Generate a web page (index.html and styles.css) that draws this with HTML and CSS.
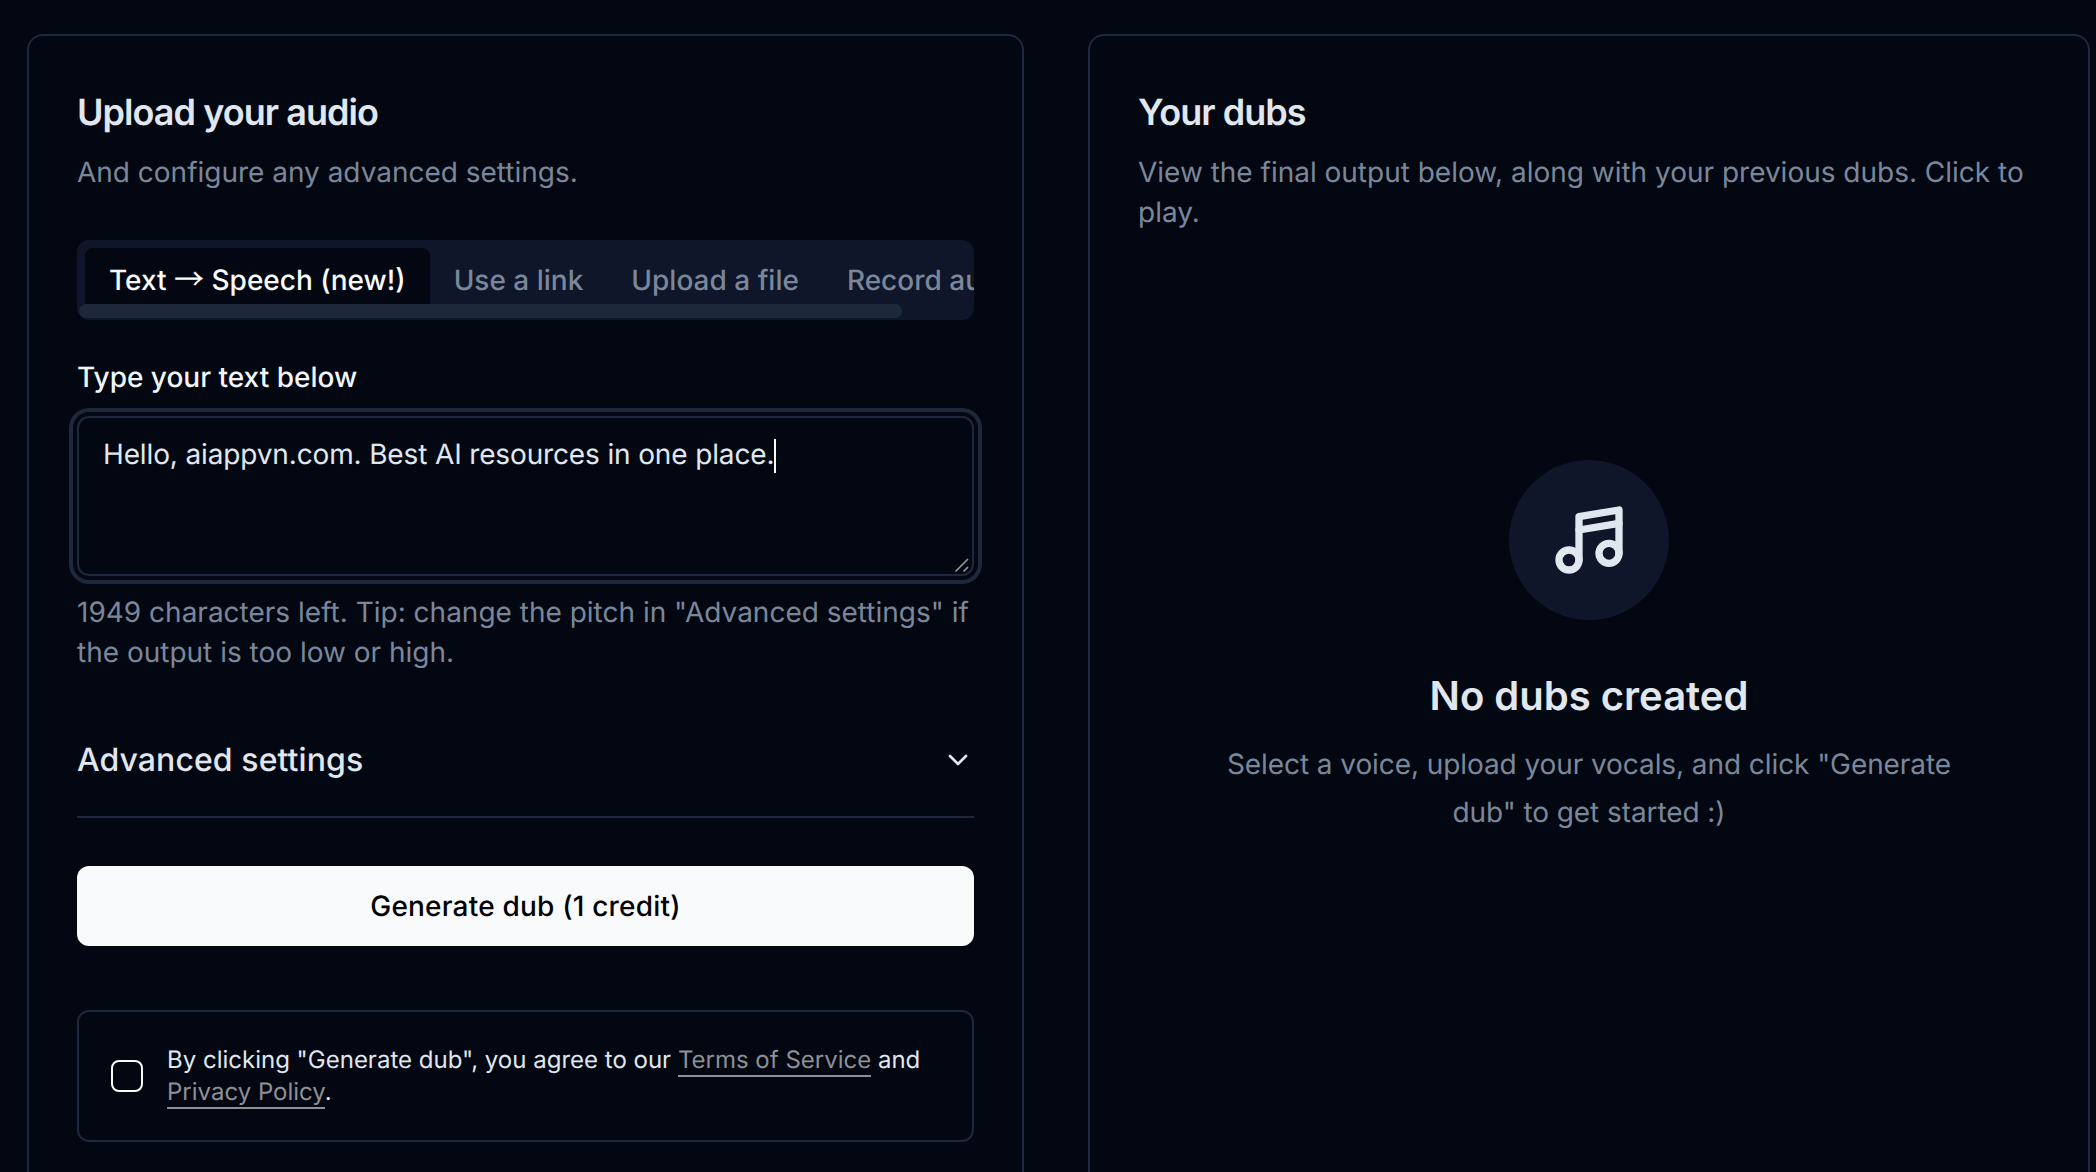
FILE: index.html
```html
<!DOCTYPE html>
<html lang="en">
<head>
    <meta charset="UTF-8">
    <title>Generate dub</title>
    <link rel="stylesheet" href="styles.css">
</head>
<body>
    <main class="page">
        <section class="card">
            <h2 class="card-title">Upload your audio</h2>
            <p class="card-desc">And configure any advanced settings.</p>

            <div class="tabs">
                <div class="tabs-list">
                    <div class="tab active">Text <span class="arrow">→</span> Speech (new!)</div>
                    <div class="tab">Use a link</div>
                    <div class="tab">Upload a file</div>
                    <div class="tab">Record audio</div>
                </div>
                <div class="tabs-track"><div class="tabs-thumb"></div></div>
            </div>

            <div class="field-label">Type your text below</div>
            <div class="textarea">
                <span class="typed">Hello, aiappvn.com. Best AI resources in one place.</span><span class="caret"></span>
                <svg class="grip" width="16" height="16" viewBox="0 0 16 16">
                    <path d="M1.5 14.5 14 2M9.5 14.5 14 10" stroke="#9a9a9a" stroke-width="1.6" fill="none"/>
                </svg>
            </div>
            <p class="hint">1949 characters left. Tip: change the pitch in "Advanced settings" if the output is too low or high.</p>

            <div class="accordion">
                <span>Advanced settings</span>
                <svg width="32" height="32" viewBox="0 0 24 24" fill="none" stroke="currentColor" stroke-width="2" stroke-linecap="round" stroke-linejoin="round">
                    <path d="m6 9 6 6 6-6"/>
                </svg>
            </div>

            <button class="btn-primary">Generate dub (1 credit)</button>

            <div class="consent">
                <div class="checkbox"></div>
                <p>By clicking "Generate dub", you agree to our <a href="#">Terms of Service</a> and <a href="#">Privacy Policy</a>.</p>
            </div>
        </section>

        <section class="card">
            <h2 class="card-title">Your dubs</h2>
            <p class="card-desc">View the final output below, along with your previous dubs. Click to play.</p>

            <div class="empty">
                <div class="empty-icon">
                    <svg width="80" height="80" viewBox="0 0 24 24" fill="none" stroke="currentColor" stroke-width="2.2" stroke-linecap="round" stroke-linejoin="round">
                        <path d="M9 18V5l12-2v13"/>
                        <path d="m9 9 12-2"/>
                        <circle cx="6" cy="18" r="3"/>
                        <circle cx="18" cy="16" r="3"/>
                    </svg>
                </div>
                <h3>No dubs created</h3>
                <p>Select a voice, upload your vocals, and click "Generate dub" to get started :)</p>
            </div>
        </section>
    </main>
</body>
</html>
```

FILE: styles.css
```css
* {
    box-sizing: border-box;
}
html, body {
    height: 100%;
}
body {
    margin: 0;
    overflow: hidden;
    background: #030711;
    color: #e1e7ef;
    font-family: Inter, "Noto Sans", sans-serif;
    font-size: 28px;
    line-height: 40px;
    text-rendering: geometricPrecision;
}
h2, h3, p {
    margin: 0;
}
.page {
    display: grid;
    grid-template-columns: 997px 1002px;
    gap: 64px;
    height: 100%;
    overflow: hidden;
    padding: 34px 0 0 27px;
}
.card {
    border: 2px solid #1d283a;
    border-radius: 16px;
    padding: 48px 48px 0;
    height: 1300px;
}
.card-title {
    font-size: 36px;
    line-height: 56px;
    font-weight: 600;
    letter-spacing: -0.95px;
}
.card-desc {
    margin-top: 12px;
    color: #7a879b;
    letter-spacing: -0.01px;
}
.tabs {
    margin-top: 48px;
    height: 80px;
    background: #0f1629;
    border-radius: 12px;
    overflow: hidden;
}
.tabs-list {
    display: flex;
    padding: 8px 8px 0;
    height: 64px;
    white-space: nowrap;
}
.tab {
    padding: 12px 24px 4px;
    font-weight: 500;
    color: #7a879b;
    border-radius: 8px 8px 0 0;
}
.tab.active {
    background: #030711;
    color: #f8fafc;
}
.arrow {
    font-family: "Noto Sans CJK JP", "Liberation Sans", sans-serif;
    font-size: 30px;
    font-weight: 400;
    line-height: 28px;
}
.tabs-track {
    height: 16px;
    padding: 0 2px 2px;
}
.tabs-thumb {
    width: 823px;
    height: 14px;
    background: #1d283a;
    border-radius: 7px;
}
.field-label {
    margin-top: 37px;
    font-weight: 500;
    color: #f1f5f9;
}
.textarea {
    position: relative;
    margin-top: 19px;
    height: 160px;
    padding: 16px 24px;
    border: 2px solid #1d283a;
    border-radius: 12px;
    box-shadow: 0 0 0 4px #030711, 0 0 0 8px #1d283a;
}
.typed {
    letter-spacing: -0.14px;
}
.caret {
    display: inline-block;
    width: 2px;
    height: 34px;
    background: #f8fafc;
    vertical-align: -9px;
}
.grip {
    position: absolute;
    right: 2px;
    bottom: 1px;
}
.hint {
    margin-top: 16px;
    color: #7a879b;
}
.accordion {
    display: flex;
    align-items: center;
    justify-content: space-between;
    margin-top: 32px;
    padding: 32px 0;
    border-bottom: 2px solid #1d283a;
    font-size: 32px;
    line-height: 48px;
    font-weight: 500;
    letter-spacing: 0.08px;
}
.btn-primary {
    display: block;
    width: 100%;
    height: 80px;
    margin-top: 48px;
    border: 0;
    border-radius: 12px;
    background: #f8fafc;
    color: #020205;
    font: 500 28px/40px Inter, "Noto Sans", sans-serif;
    letter-spacing: 0.2px;
    text-rendering: geometricPrecision;
}
.consent {
    display: flex;
    align-items: center;
    gap: 24px;
    margin-top: 64px;
    padding: 32px;
    border: 2px solid #1d283a;
    border-radius: 12px;
    font-size: 24px;
    line-height: 32px;
    font-weight: 400;
}
.checkbox {
    flex: none;
    width: 32px;
    height: 32px;
    border: 2px solid #f8fafc;
    border-radius: 8px;
}
.consent a {
    color: #8e9096;
    text-decoration: none;
    padding-bottom: 1px;
    border-bottom: 2px solid #8e9096;
}
.empty {
    display: flex;
    flex-direction: column;
    align-items: center;
    margin-top: 228px;
    text-align: center;
}
.empty-icon {
    display: flex;
    align-items: center;
    justify-content: center;
    width: 160px;
    height: 160px;
    border-radius: 50%;
    background: #0f1629;
}
.empty h3 {
    margin-top: 48px;
    font-size: 40px;
    line-height: 56px;
    font-weight: 600;
}
.empty p {
    margin-top: 16px;
    max-width: 760px;
    color: #7a879b;
    line-height: 48px;
    letter-spacing: -0.08px;
}
```
